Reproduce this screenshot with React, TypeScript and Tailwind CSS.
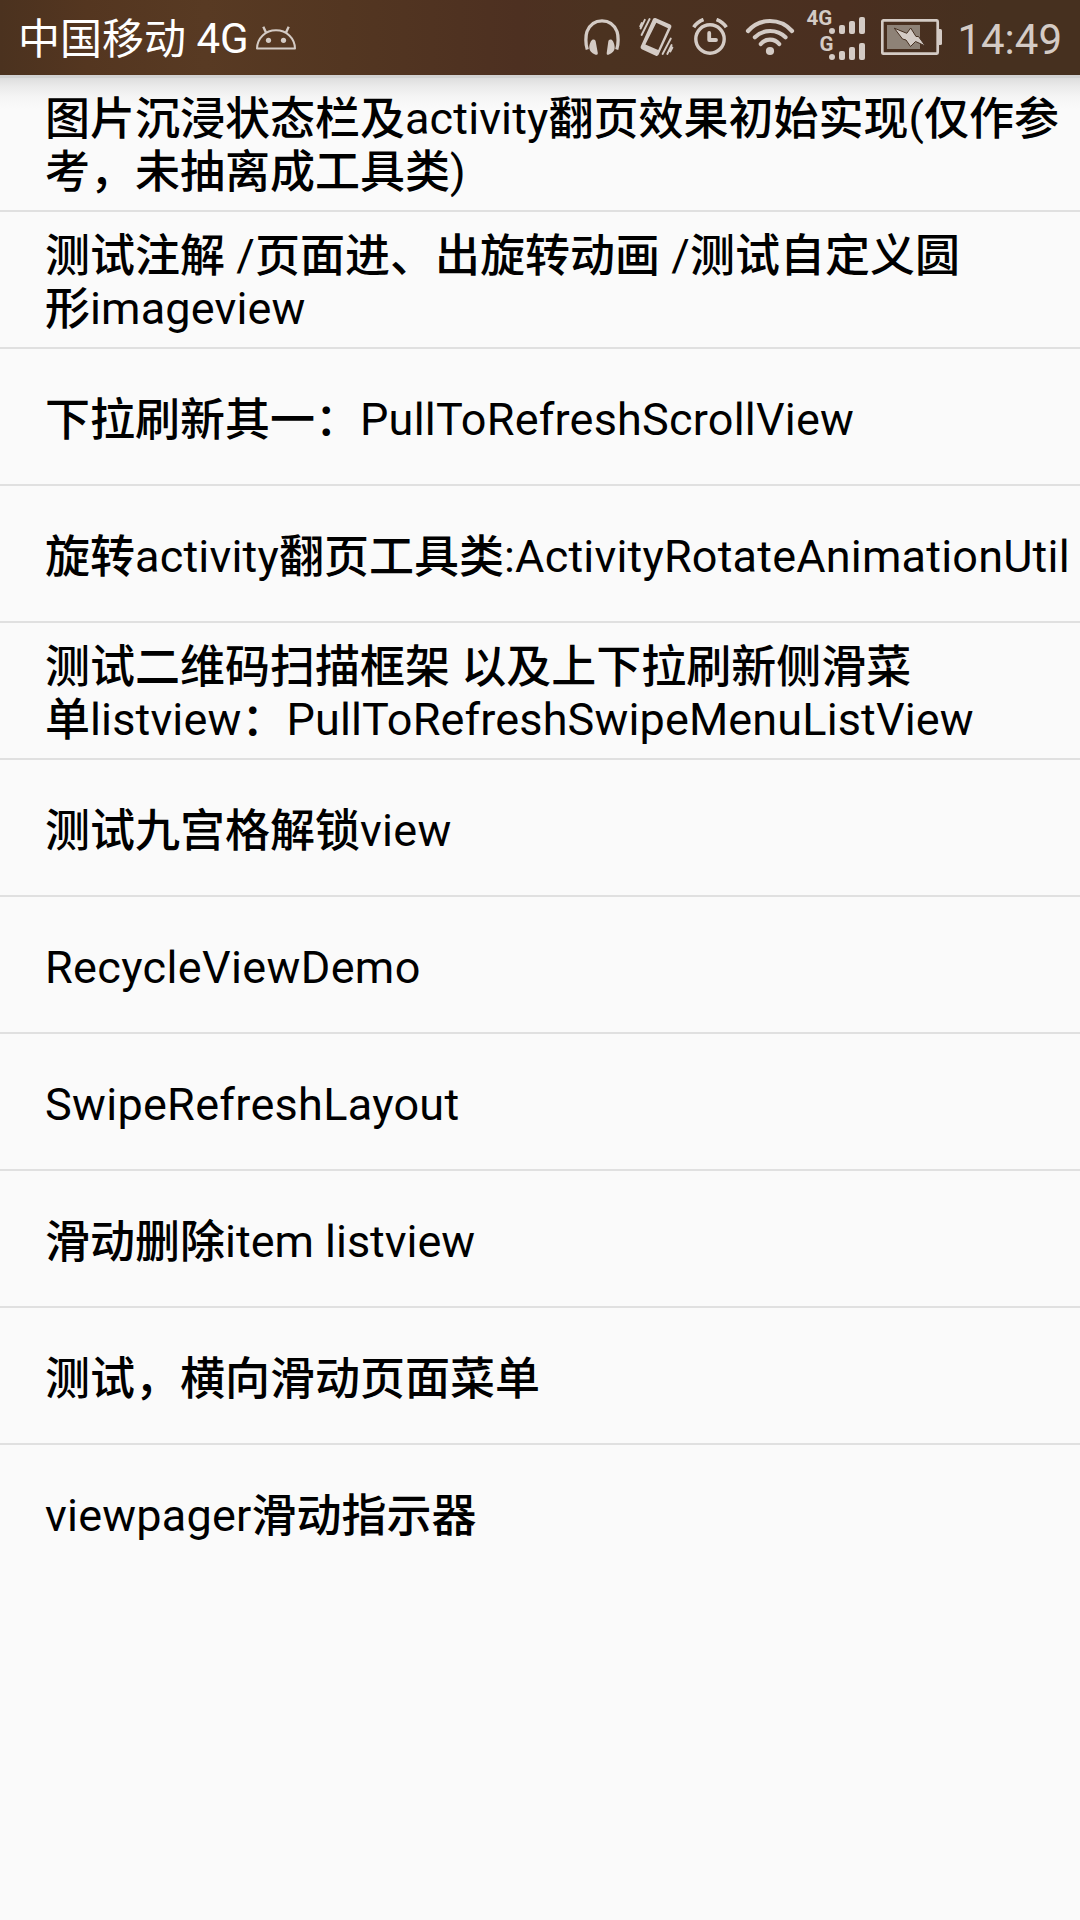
import React from "react";

const items: { lines: string[]; tracking: string }[] = [
  { lines: ["图片沉浸状态栏及activity翻页效果初始实现(仅作参", "考，未抽离成工具类)"], tracking: "tracking-[0.12px]" },
  { lines: ["测试注解 /页面进、出旋转动画 /测试自定义圆", "形imageview"], tracking: "tracking-[0.15px]" },
  { lines: ["下拉刷新其一：PullToRefreshScrollView"], tracking: "tracking-[0.21px]" },
  { lines: ["旋转activity翻页工具类:ActivityRotateAnimationUtil"], tracking: "tracking-[0.19px]" },
  { lines: ["测试二维码扫描框架 以及上下拉刷新侧滑菜", "单listview：PullToRefreshSwipeMenuListView"], tracking: "tracking-[0.14px]" },
  { lines: ["测试九宫格解锁view"], tracking: "tracking-[0.3px]" },
  { lines: ["RecycleViewDemo"], tracking: "tracking-[0.36px]" },
  { lines: ["SwipeRefreshLayout"], tracking: "tracking-[0.3px]" },
  { lines: ["滑动删除item listview"], tracking: "tracking-[-0.02px]" },
  { lines: ["测试，横向滑动页面菜单"], tracking: "tracking-normal" },
  { lines: ["viewpager滑动指示器"], tracking: "tracking-[0.22px]" },
];

/** Splits a line so that Chinese runs get a slightly heavier weight than Latin runs. */
function Line({ text, tracking }: { text: string; tracking: string }) {
  const runs = text.match(/[\u3000-\u9fff\uff00-\uffef]+|[^\u3000-\u9fff\uff00-\uffef]+/g) ?? [];
  return (
    <div className="h-[53px] whitespace-pre">
      {runs.map((run, i) =>
        /[\u3000-\u9fff\uff00-\uffef]/.test(run) ? (
          <span key={i} className="relative top-px font-medium">{run}</span>
        ) : (
          <span key={i} className={tracking}>{run}</span>
        )
      )}
    </div>
  );
}

function Android() {
  return (
    <svg className="h-[26px] w-[42px]" viewBox="0 0 42 26" fill="none" stroke="#d4cbc5" strokeWidth="2">
      <path d="M2 23.500C2.300 13 10.500 5.300 21 5.300S39.700 13 40 23.500Z" strokeLinejoin="round" />
      <path d="M11 7.400 8.300 1.800M31 7.400 33.700 1.800" strokeWidth="2.400" />
      <circle cx="13.500" cy="15.300" r="2.600" fill="#d4cbc5" stroke="none" />
      <circle cx="28.500" cy="15.300" r="2.600" fill="#d4cbc5" stroke="none" />
    </svg>
  );
}

function Headphones() {
  return (
    <svg className="h-[38px] w-[38px]" viewBox="583 18 38 38" fill="#d4cbc5">
      <path d="M587.300 49.500C585.300 44 585.600 35.500 587 31.500C590 24 595.800 20.800 602 20.800S614 24 617 31.500C618.400 35.500 618.700 44 616.700 49.500" fill="none" stroke="#d4cbc5" strokeWidth="3.300" />
      <path d="M593 39.500C594.600 39.200 595.400 40 595.700 41.500L597.800 53C598 54.600 596.500 55.300 595 54.600C591.500 53 589.500 51 589.300 48C589.200 44 591 40 593 39.500Z" />
      <path d="M611 39.500C609.400 39.200 608.600 40 608.300 41.500L606.700 53C606.500 54.600 607.500 55.300 609 54.600C612.500 53 614.500 51 614.700 48C614.800 44 613 40 611 39.500Z" />
    </svg>
  );
}

function Vibrate() {
  return (
    <svg className="h-[40px] w-[36px]" viewBox="638 17 36 40" fill="none" stroke="#d4cbc5" strokeLinecap="round">
      <path fill="#d4cbc5" stroke="none" fillRule="evenodd" d="M655.500 18 670.300 24.500Q672 25.500 671.300 27.200L658.500 54.800Q657.600 56.400 655.800 55.700L641.800 49.300Q640 48.300 640.700 46.500L653 19Q653.800 17.500 655.500 18ZM656.300 22.800 668 28.200 658.200 50 645.400 44.600Z" />
      <path strokeWidth="1.900" d="M649.800 19 641.800 35M645 19.800 640.800 28.500M642 23 640.400 26.500M671 38.500 662.800 54M671.800 45 667.500 54M672.600 47.500 670.500 51.500" transform="translate(-.2 0)" />
    </svg>
  );
}

function Alarm() {
  return (
    <svg className="h-[38px] w-[38px]" viewBox="691 18 38 38" fill="none" stroke="#d4cbc5">
      <circle cx="710" cy="39" r="14.200" strokeWidth="3.400" />
      <path strokeWidth="3.600" d="M693.700 27.300Q697 22 703.500 19.500M726.300 27.300Q723 22 716.500 19.500" />
      <path strokeWidth="3.800" strokeLinecap="round" strokeLinejoin="round" d="M709.200 33V40H716" />
    </svg>
  );
}

function Wifi() {
  return (
    <svg className="h-[38px] w-[50px]" viewBox="745 18 50 38" fill="none" stroke="#d4cbc5">
      <path strokeWidth="4.200" strokeLinecap="round" d="M748 31A29.200 29.200 0 0 1 792 31M754.900 37.200A22 22 0 0 1 785.500 37.200M760.800 44A11.800 11.800 0 0 1 779.200 44" />
      <circle cx="770" cy="51" r="4.100" fill="#d4cbc5" stroke="none" />
    </svg>
  );
}

function Bars() {
  return (
    <div className="flex h-[17px] items-end gap-1">
      <div className="h-[6px] w-[6px] rounded-full bg-[#d4cbc5]" />
      <div className="h-[9px] w-[6px] rounded-[2px] bg-[#d4cbc5]" />
      <div className="h-[13px] w-[6px] rounded-[2px] bg-[#d4cbc5]" />
      <div className="h-[17px] w-[6px] rounded-[2px] bg-[#d4cbc5]" />
    </div>
  );
}

function Signal() {
  return (
    <div className="relative flex h-[75px] w-[60px] flex-col items-end gap-[9px] pt-[17px]">
      <Bars />
      <Bars />
      <span className="absolute left-px top-[7px] text-[20.500px] font-bold leading-[23px]">4G</span>
      <span className="absolute left-[14px] top-[33px] text-[20.500px] font-bold leading-[23px]">G</span>
    </div>
  );
}

function Battery() {
  return (
    <svg className="h-[36px] w-[61px]" viewBox="881 19 61 36" fill="#d4cbc5">
      <rect x="882.300" y="20.300" width="55.400" height="33.400" rx="1.500" fill="none" stroke="#d4cbc5" strokeWidth="2.700" />
      <path d="M939 29h1.500q1.500 0 1.500 1.500v13q0 1.500-1.500 1.500H939z" />
      <rect x="887" y="25" width="33" height="24" fill="#8e8277" />
      <path stroke="#463021" strokeWidth="1" d="M894.300 28.200 906.800 33.300 910.700 28 916 36.500 918.500 36.500 925.300 45.900 915.500 41.500 910.500 46.500 906 40 902.500 39Z" />
    </svg>
  );
}

export default function App() {
  return (
    <div className="flex h-[1920px] w-[1080px] flex-col overflow-hidden bg-[#fafafa] font-['Roboto','Noto_Sans_CJK_SC',sans-serif] text-black">
      <header className="flex h-[75px] shrink-0 items-center bg-[linear-gradient(90deg,#4b321f_0%,#543620_8%,#583a23_19%,#533621_32%,#4d3021_48%,#4b3220_56%,#4a2f20_78%,#46301f_92%,#46301f_100%)] text-[#d4cbc5]">
        <div className="whitespace-pre pl-[18px] pt-[2px] text-[42px] leading-[49px] text-white">
          <span className="relative top-px">中国移动</span> 4G
        </div>
        <div className="ml-[6px] flex"><Android /></div>
        <div className="ml-auto flex items-center pr-[18px]">
          <div className="mb-px"><Headphones /></div>
          <div className="mb-px ml-[17px]"><Vibrate /></div>
          <div className="mb-px ml-[17px]"><Alarm /></div>
          <div className="mb-px ml-[16px]"><Wifi /></div>
          <div className="ml-[10px]"><Signal /></div>
          <div className="mb-px ml-[16px]"><Battery /></div>
          <div className="ml-[15px] pt-[3px] text-[42px] leading-[49px]">14:49</div>
        </div>
      </header>
      <main className="flex flex-1 flex-col bg-[linear-gradient(180deg,#d2d2d2_0px,#d2d2d2_3px,#dedede_3px,#ebebeb_12px,#f5f5f5_22px,#fafafa_34px)]">
        {items.map((item, i) => (
          <div
            key={i}
            className="flex h-[137px] flex-col justify-center border-b-2 border-[#e0e0e0] pt-[5px] pl-[45px] text-[45px] leading-[53px] last:border-transparent"
          >
            {item.lines.map((line) => (
              <Line key={line} text={line} tracking={item.tracking} />
            ))}
          </div>
        ))}
      </main>
    </div>
  );
}
